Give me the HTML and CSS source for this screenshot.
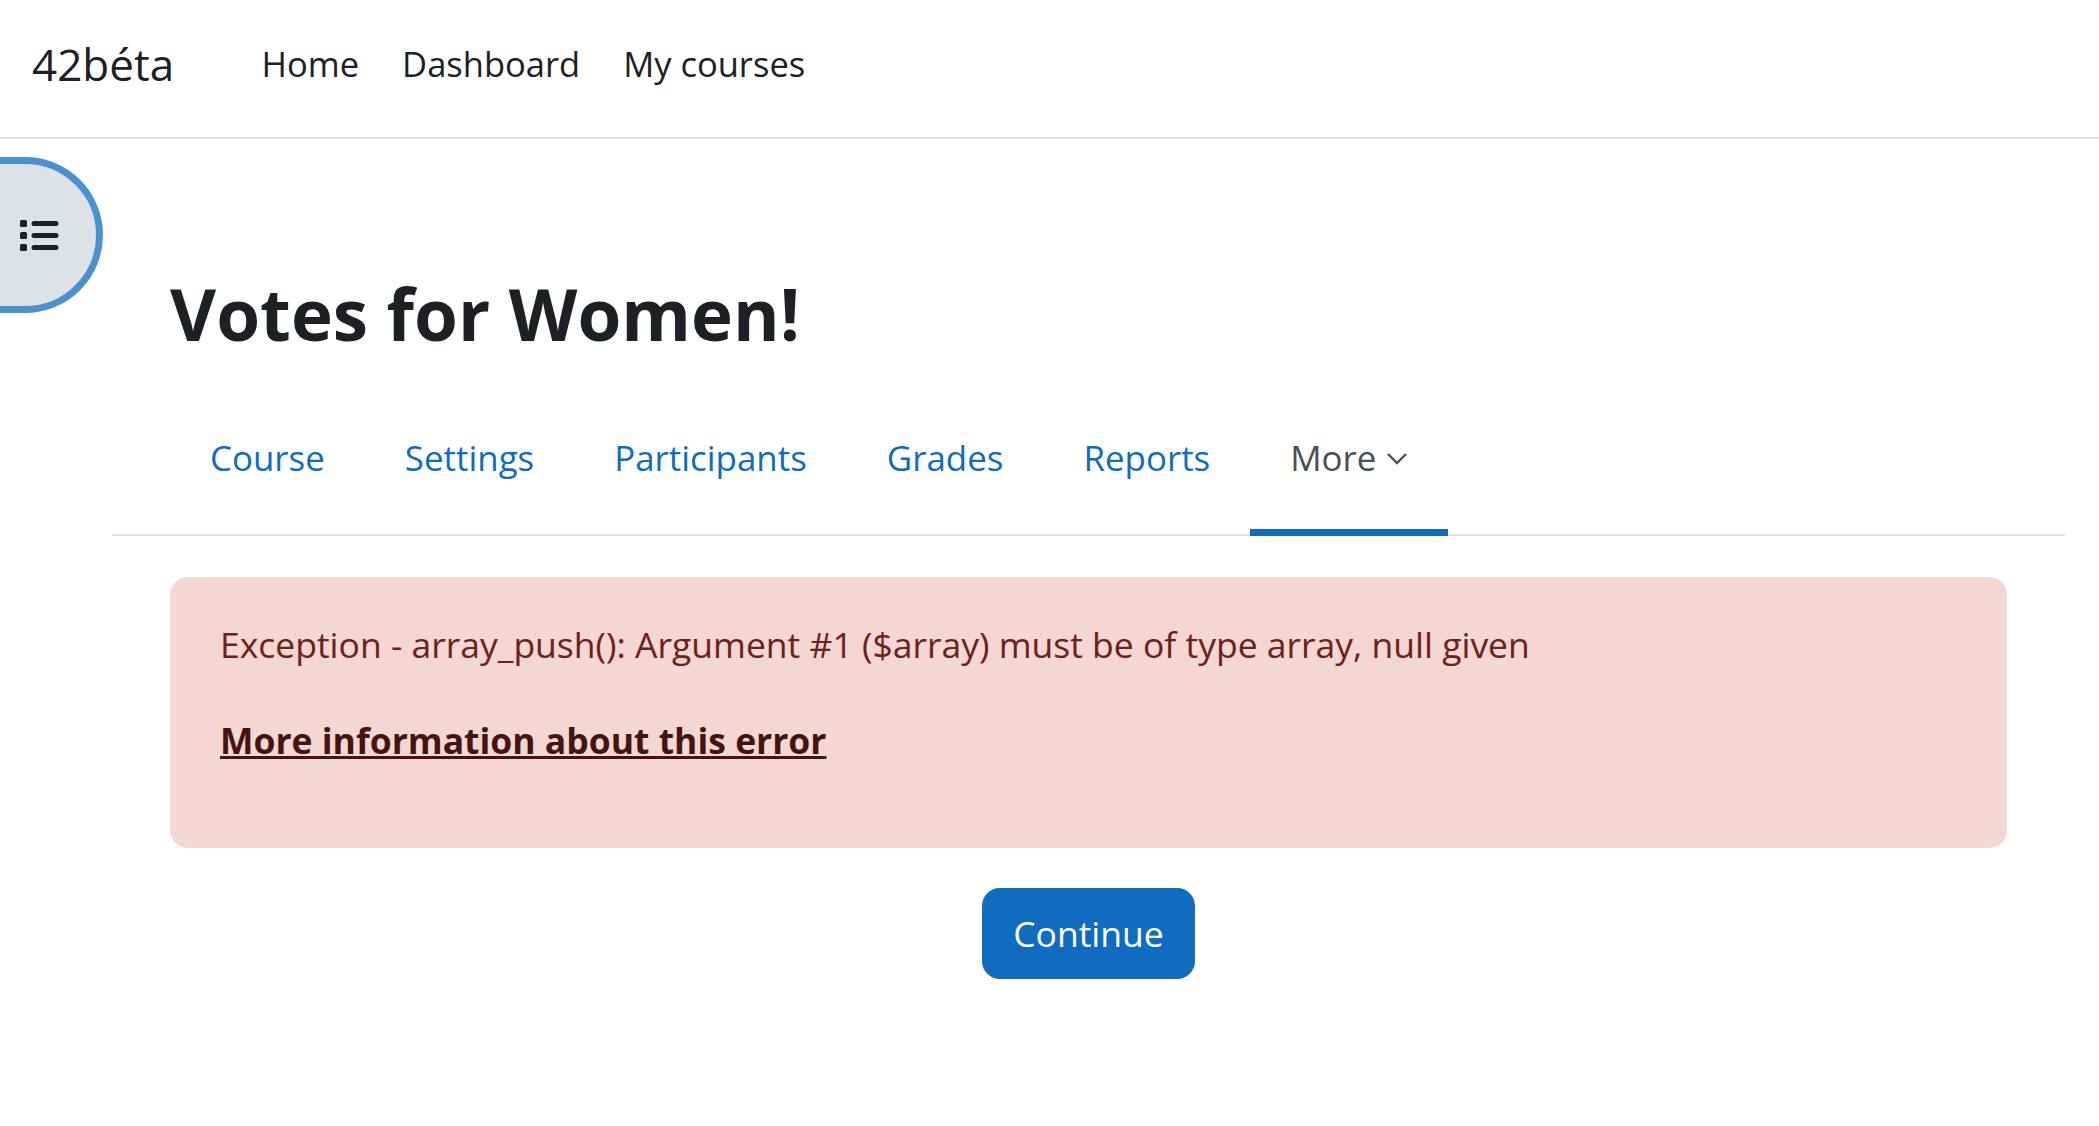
FILE: index.html
```html
<!DOCTYPE html>
<html>

<head>
    <meta charset="utf-8">
    <title>Votes for Women!</title>
    <link rel="stylesheet" href="styles.css">
</head>

<body>
    <header class="navbar">
        <a class="brand" href="#">42béta</a>
        <nav class="primary-nav">
            <a href="#">Home</a>
            <a href="#">Dashboard</a>
            <a href="#">My courses</a>
        </nav>
    </header>

    <button class="drawer-toggle" title="Open course index">
        <svg class="list-icon" viewBox="0 0 40 34" width="40" height="34">
            <rect x="1" y="2" width="7" height="7" rx="1.5" />
            <rect x="1" y="14" width="7" height="7" rx="1.5" />
            <rect x="1" y="26" width="7" height="7" rx="1.5" />
            <line x1="15" y1="5.5" x2="37" y2="5.5" />
            <line x1="15" y1="17.5" x2="37" y2="17.5" />
            <line x1="15" y1="29.5" x2="37" y2="29.5" />
        </svg>
    </button>

    <div class="page">
        <h1 class="page-title">Votes for Women!</h1>

        <div class="secondary-nav">
            <ul class="tabs">
                <li><a class="tab" href="#">Course</a></li>
                <li><a class="tab" href="#">Settings</a></li>
                <li><a class="tab" href="#">Participants</a></li>
                <li><a class="tab" href="#">Grades</a></li>
                <li><a class="tab" href="#">Reports</a></li>
                <li>
                    <a class="tab active" href="#">More<svg class="caret" viewBox="0 0 22 13" width="22" height="13"><polyline points="2,2 11,11 20,2" /></svg></a>
                </li>
            </ul>
        </div>

        <div class="alert-danger">
            <p class="error-message">Exception - array_push(): Argument #1 ($array) must be of type array, null given</p>
            <p class="more-info"><a href="#">More information about this error</a></p>
        </div>

        <div class="continue-row">
            <button class="btn-primary">Continue</button>
        </div>
    </div>
</body>

</html>
```

FILE: styles.css
```css
body {
    margin: 0;
    font-family: "Open Sans", "Noto Sans", sans-serif;
    font-size: 34px;
    line-height: 1.5;
    color: #1d2125;
    background: #fff;
}

a {
    text-decoration: none;
}

/* top bar */
.navbar {
    display: flex;
    align-items: center;
    height: 127px;
    padding: 0 0 10px 32px;
    border-bottom: 2px solid #dee2e6;
}

.brand {
    font-size: 44px;
    color: #1d2125;
    margin-right: 66px;
}

.primary-nav {
    display: flex;
}

.primary-nav a {
    color: #1d2125;
    padding: 0 21.5px;
    font-size: 34.5px;
}

/* course index toggle */
.drawer-toggle {
    position: absolute;
    left: -40px;
    top: 157px;
    width: 143px;
    height: 156px;
    box-sizing: border-box;
    border: 7px solid #4b91cf;
    border-radius: 0 78px 78px 0;
    background: #dee2e6;
    display: flex;
    align-items: center;
    justify-content: flex-end;
    padding: 0 37px 0 0;
    cursor: pointer;
}

.list-icon rect {
    fill: #1d2125;
}

.list-icon line {
    stroke: #1d2125;
    stroke-width: 5;
    stroke-linecap: round;
}

/* page body */
.page {
    padding: 132px 92px 60px 170px;
}

.page-title {
    margin: 0 0 45px 0;
    font-size: 71px;
    font-weight: 700;
    line-height: 1.2;
}

.secondary-nav {
    margin: 0 -58px;
    padding-left: 58px;
    border-bottom: 2px solid #dee2e6;
}

.tabs {
    display: flex;
    list-style: none;
    margin: 0;
    padding: 0;
}

.tab {
    display: block;
    padding: 31px 40px 46px;
    font-size: 34.9px;
    line-height: 51px;
    color: #0f6cbf;
    border-bottom: 7px solid transparent;
    margin-bottom: -2px;
}

.tab.active {
    color: #495057;
    border-bottom-color: #0f6cbf;
}

.caret {
    margin-left: 10px;
    vertical-align: 6px;
}

.caret polyline {
    fill: none;
    stroke: #495057;
    stroke-width: 2.4;
}

/* error box */
.alert-danger {
    margin-top: 41px;
    padding: 42px 50px;
    background: #f4d6d2;
    color: #6e211a;
    border-radius: 18px;
    font-size: 35.5px;
    line-height: 51px;
}

.error-message {
    margin: 0 0 45px 0;
}

.more-info {
    margin: 0 0 40px 0;
}

.more-info a {
    color: #441510;
    font-weight: 700;
    text-decoration: underline;
}

.continue-row {
    display: flex;
    justify-content: center;
    margin-top: 40px;
}

.btn-primary {
    font-family: inherit;
    font-size: 35.5px;
    line-height: 51px;
    padding: 18px 29px;
    border: 2px solid #0f6cbf;
    border-radius: 18px;
    background: #0f6cbf;
    color: #fff;
    cursor: pointer;
}
```
